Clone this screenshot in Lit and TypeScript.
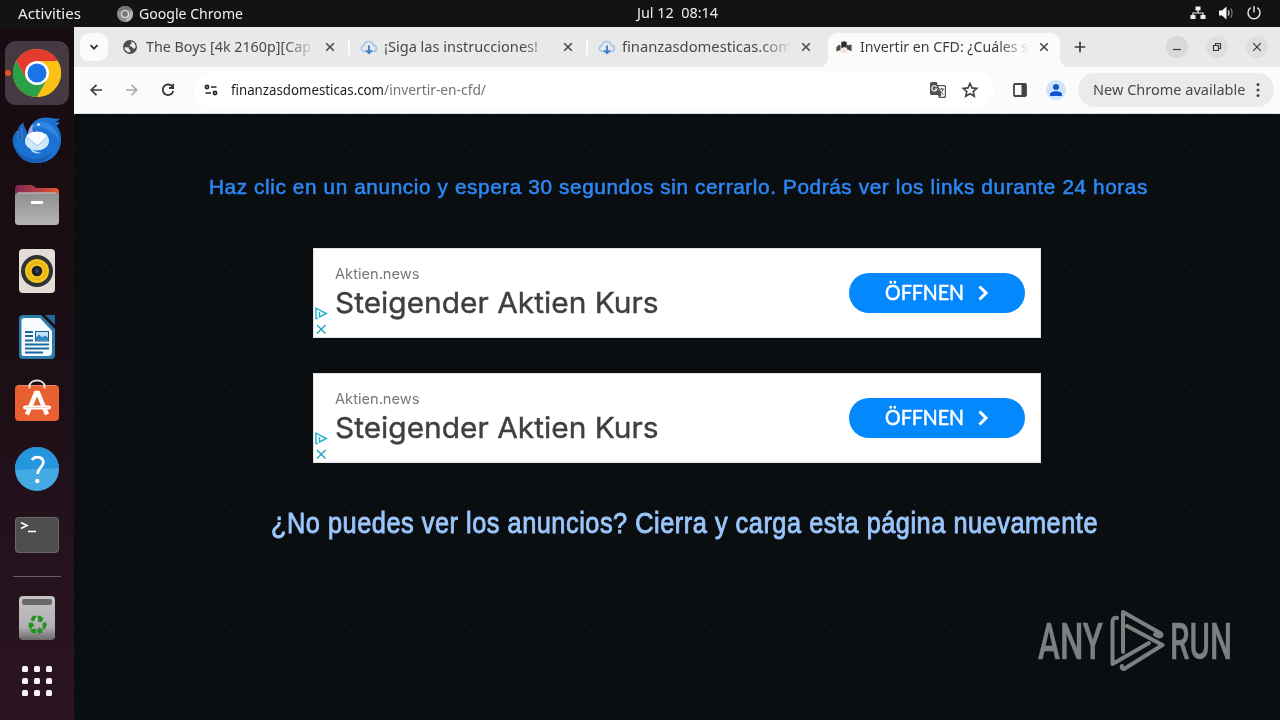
import { LitElement, html, svg, css } from "lit";
import type { TemplateResult } from "lit";
import { customElement, property, query } from "lit/decorators.js";
import { classMap } from "lit/directives/class-map.js";

interface Tab {
  title: string;
  width: number;
  icon: TemplateResult;
  active?: boolean;
  divider?: boolean;
}

// One line of text, squeezed or stretched to a given width.
@customElement("fit-text")
export class FitText extends LitElement {
  static styles = css`
    :host {
      display: inline-block;
      flex: none;
      text-align: left;
      white-space: pre;
    }
    span {
      display: inline-block;
      transform-origin: 0 50%;
    }
  `;

  @property({ type: Number }) width = 100;

  @query("span") private _span!: HTMLSpanElement;

  protected render() {
    return html`<span><slot></slot></span>`;
  }

  protected updated() {
    this.style.width = `${this.width}px`;
    this._span.style.transform = "none";
    const natural = this._span.getBoundingClientRect().width;
    if (natural > 0) {
      this._span.style.transform = `scaleX(${this.width / natural})`;
    }
  }
}

const globeIcon = html`
  <svg width="16" height="16" viewBox="0 0 16 16">
    <circle cx="8" cy="8" r="7" fill="#4c4d4f" />
    <path
      d="M2.400 8.300h3.300c.9 0 1.300.6 1.300 1.400v.9h1.300v2.700c-3.300.2-5.700-1.900-5.900-5zM9.300 2.600c2.600.6 4.300 2.600 4.400 5.300-.4 1.200-1.300 1.900-2.400 1.700-.7-.2-.8-.9-1.200-1.500-.6-.6-1.600-.5-2.200-1-.5-.6-.2-1.300.4-1.700.6-.3 1.100-.4 1.100-1.100z"
      fill="#e9e9e9"
    />
  </svg>
`;

const cloudIcon = html`
  <svg width="18" height="16" viewBox="0 0 18 16" fill="none">
    <path
      d="M6 12.400H4.300C2.600 12.400 1.400 11 1.400 9.400c0-1.600 1-2.700 2.500-2.900C4.100 4 6.200 2.500 8.600 2.500c2.400 0 4.200 1.500 4.700 3.800 1.900.1 3.100 1.400 3.100 3.100 0 1.700-1.200 3-2.900 3h-1.700"
      stroke="#a3c4ea"
      stroke-width="1.600"
    />
    <path d="M9 6.500v7.800M6 11.400L9 14.300l3-2.900" stroke="#3f7fd0" stroke-width="1.900" />
  </svg>
`;

const chessIcon = html`
  <svg width="16" height="16" viewBox="0 0 16 16">
    <path d="M.3 8.500L2.500 6h2v5l-4.200 1.500z" fill="#55504e" />
    <path d="M5.300 2.500l1.200.5L8 2l1.300 1 1.400-.5V9L8 8l-2.700 1.500z" fill="#2e2c2c" />
    <path d="M11 5.500l1.500.8 3-.8v7L13 11l-2-.5z" fill="#4b4543" />
    <path d="M3.500 12.500L8 9l4 3.500-1 1.500H4.500z" fill="#f2e3d9" />
  </svg>
`;

const TABS: Tab[] = [
  { title: "The Boys [4k 2160p][Cap", width: 165, icon: globeIcon, divider: true },
  { title: "¡Siga las instrucciones!", width: 154, icon: cloudIcon, divider: true },
  { title: "finanzasdomesticas.com", width: 170, icon: cloudIcon },
  { title: "Invertir en CFD: ¿Cuáles s", width: 168, icon: chessIcon, active: true },
];

const cross = html`
  <svg class="cross" width="10" height="10" viewBox="0 0 10 10">
    <path d="M1.200 1.200l7.600 7.600M8.800 1.200L1.200 8.800" stroke="#48494b" stroke-width="1.600" />
  </svg>
`;

// Dock icons share a 74x66 cell whose centre is 37,33.
const chromeDock = svg`
  <rect x="5" y="1" width="64" height="64" rx="11" fill="#463a42" />
  <circle cx="8" cy="33" r="3" fill="#e95420" />
  <circle cx="37" cy="33" r="24" fill="#fbc116" />
  <path d="M37 21h20.800A24 24 0 0 0 16.200 21L26.600 39z" fill="#e33b2e" />
  <path d="M16.200 21A24 24 0 0 0 37 57L47.400 39 37 33 26.600 39z" fill="#2aa147" />
  <path d="M47.400 39L37 57A24 24 0 0 0 57.800 21H37z" fill="#fbc116" />
  <circle cx="37" cy="33" r="12" fill="#fff" />
  <circle cx="37" cy="33" r="9.500" fill="#1b73e8" />
`;

const mailDock = svg`
  <path d="M17 47C10 36 12 28 18 24c1-4 3-6 5.500-7.500C24 21 26 24 28 28v16z" fill="#1d66bf" />
  <path d="M18 25c-1 6 0 12 3 18M22 22c-1 4 0 8 1 11" stroke="#3b8be0" fill="none" />
  <path d="M29 24c2-8 9-12.500 17-12.500 5 .5 9 1.500 14 1-1 2-3 3-5 3.500 2 0 4 .5 5 0-1 2-2 3-3.500 3.500C60 24 61.500 29 61 35c-1 13-11 22-24 22-12 0-20-7-22.500-17 0-4 2-7 5-9 2 5 5 6 7 5z" fill="#1c72d2" />
  <path d="M31 22c4-7 12-8 18-4 6 3 10 11 10 19-2-8-5-10-9-11-4-5-11-6-19-4z" fill="#3488e4" />
  <path d="M14 38c3 8 9 13 18 14.500 8 1 15-2 20-7-3 7-8 11.500-16 11.500-12 0-20-7-22-19z" fill="#195fb6" />
  <path d="M28 29c0-5 2-9 6-11-2 3-2 5-1 8z" fill="#a9a7e0" />
  <ellipse cx="37" cy="35" rx="12" ry="9.500" fill="#cfe8fa" />
  <path d="M26.500 30c4-5.500 16-6 21 0L37.500 39z" fill="#f8fcff" />
  <path d="M26.500 31.500L37.500 40 48 30.500" stroke="#a0c8e2" fill="none" />
  <path d="M30 42c4 2 6 5 11 4.500-3 2-9 1-11-4.500z" fill="#bfe0f7" />
  <circle cx="38.500" cy="18.500" r="1.300" fill="#fff" />
`;

const filesDock = svg`
  <defs>
    <linearGradient id="folder"><stop stop-color="#7c2756" /><stop offset="1" stop-color="#e8562a" /></linearGradient>
    <linearGradient id="front" x2="0" y2="1"><stop stop-color="#8f8f8f" /><stop offset="1" stop-color="#b4b4b4" /></linearGradient>
  </defs>
  <path d="M15 26v-9q0-4 4-4h12q2 0 3.500 1.500L36 16h19q4 0 4 4v9z" fill="url(#folder)" />
  <rect x="15" y="20.500" width="44" height="32.500" rx="3.500" fill="url(#front)" />
  <path d="M18 21h38" stroke="#c2c2c2" />
  <rect x="31" y="29" width="12" height="3" rx=".5" fill="#fff" />
`;

const musicDock = svg`
  <rect x="19" y="11" width="36" height="44" rx="4" fill="#e2ded6" />
  <circle cx="37" cy="33" r="16" fill="#303238" />
  <circle cx="37" cy="33" r="12" fill="#f3c51c" />
  <circle cx="37" cy="33" r="8.500" fill="none" stroke="#c99c12" stroke-width=".8" />
  <circle cx="37" cy="33" r="5.300" fill="#202227" />
  <circle cx="37" cy="33" r="2" fill="#39465a" />
`;

const writerDock = svg`
  <path d="M23 11h18l14 14v26q0 4-4 4H23q-4 0-4-4V15q0-4 4-4z" fill="#2a7dab" />
  <path d="M24 14h16l12 13v21q0 4-4 4H24q-2.500 0-2.500-2.500V16.500Q21.500 14 24 14z" fill="#f7fbfd" />
  <path d="M45 11h10v10z" fill="#1f6898" />
  <path d="M25 28h8M25 32h8M25 36.500h8M25 40.500h24M25 44.500h24M25 48.500h18" stroke="#166a9e" stroke-width="2" />
  <rect x="35.500" y="27.500" width="13" height="9.500" fill="#c4e3f7" stroke="#155f8f" />
  <path d="M36 36.500v-3l3-3 3 3 3-2 3 2v3z" fill="#3086bd" />
`;

const storeDock = svg`
  <path d="M29.500 18v-1.500c0-8 15-8 15 0V18" fill="none" stroke="#eee5df" stroke-width="2" />
  <rect x="15" y="15" width="44" height="36" rx="4" fill="#e8602f" />
  <path d="M18 15.500h38" stroke="#f28a62" />
  <path d="M29.500 18.500v-2c0-1 .2-1.500.5-2M44.500 18.500v-2c0-1-.2-1.500-.5-2" fill="none" stroke="#eee5df" stroke-width="2" />
  <path d="M27 44.500L36 23h2l9 21.500" fill="none" stroke="#fff" stroke-width="4.500" />
  <rect x="23" y="35.500" width="28" height="4" rx="2" fill="#fff" />
  <path d="M25 37.500h24" stroke="#f2b69d" stroke-width=".6" />
`;

const helpDock = svg`
  <circle cx="37" cy="33" r="22" fill="#43aae4" />
  <path d="M15 34a22 22 0 0 1 44-2z" fill="#2595de" />
  <path d="M31.800 24c3.500-4.500 11.800-3.500 11.500 2.500-.2 5-5.800 5.500-5.800 11.500" fill="none" stroke="#fff" stroke-width="2.800" />
  <circle cx="37.300" cy="45" r="2.200" fill="#fff" />
`;

const terminalDock = svg`
  <rect x="15" y="15" width="44" height="36" rx="4" fill="#4d4d4d" />
  <rect x="15.500" y="15.500" width="43" height="35" rx="3.500" fill="none" stroke="#686868" />
  <path d="M21 20.500l6 3-6 3" fill="none" stroke="#fff" stroke-width="1.600" />
  <path d="M28 29.500h8" stroke="#fff" stroke-width="1.600" />
`;

const trashDock = svg`
  <defs>
    <linearGradient id="bin" x2="0" y2="1"><stop stop-color="#c4c4c4" /><stop offset=".7" stop-color="#b3b0b3" /><stop offset="1" stop-color="#6b666a" /></linearGradient>
  </defs>
  <rect x="19" y="11" width="36" height="44" rx="4" fill="url(#bin)" />
  <rect x="22" y="14" width="30" height="6" rx="2" fill="#696969" />
  <g fill="#1f9420">
    <path d="M30.500 34.500l2.300-3.800h4l-3.200 6z" />
    <path d="M37.500 30.700h3.200l1.500 2.300 1.500-.8-1.800 4.800-5-.5 1.500-1z" />
    <path d="M42.500 38.500l3-1.700 1.500 3-2 3.700-2.200 1z" />
    <path d="M42.500 43.500v4.500h-2.500v1.800l-3.300-4 3.300-4v1.700z" />
    <path d="M36 43.500V48h-4l-2-3.500z" />
    <path d="M28 38l4.500-.5 2 4.300-1.500-.8-2.300 3.500L28 41l1.300-2.200z" />
  </g>
`;

const DOCK = [
  chromeDock,
  mailDock,
  filesDock,
  musicDock,
  writerDock,
  storeDock,
  helpDock,
  terminalDock,
];

@customElement("ad-banner")
export class AdBanner extends LitElement {
  static styles = css`
    :host {
      box-sizing: border-box;
      display: flex;
      width: 728px;
      height: 90px;
      background: #fff;
      border: 1px solid #e4e4e4;
      font-family: Inter, "Open Sans", sans-serif;
    }
    .marks {
      display: flex;
      flex-direction: column;
      justify-content: flex-end;
      gap: 2px;
      width: 21px;
      padding-bottom: 1px;
      box-sizing: border-box;
    }
    .marks svg {
      display: block;
    }
    .copy {
      flex: 1;
      display: flex;
      flex-direction: column;
      padding-top: 16px;
    }
    .site {
      font-size: 14.500px;
      line-height: 18px;
      color: #77787a;
    }
    .title {
      font-size: 29px;
      line-height: 40px;
      color: #3e3f42;
      -webkit-text-stroke: 0.400px #3e3f42;
    }
    .cta {
      align-self: center;
      display: flex;
      align-items: center;
      box-sizing: border-box;
      width: 176px;
      height: 40px;
      margin-right: 15px;
      padding-left: 36px;
      border-radius: 20px;
      background: #0388fe;
      color: #fff;
      font: 400 21px/36px Lato, "Open Sans", sans-serif;
      -webkit-text-stroke: 0.500px #fff;
      gap: 14px;
    }
    .cta fit-text {
      margin-bottom: 2px;
    }
  `;

  protected render() {
    return html`
      <div class="marks">
        <svg width="14" height="14" viewBox="0 0 14 14" fill="none" stroke="#26b4c9">
          <path d="M4 12.500H2V2.200L12.300 7.500 5.500 11V6" stroke-width="1.500" />
        </svg>
        <svg width="14" height="14" viewBox="0 0 14 14">
          <path d="M3 3l8.500 8.500M11.500 3L3 11.500" stroke="#26a9bd" stroke-width="1.500" />
        </svg>
      </div>
      <div class="copy">
        <fit-text class="site" width="84.500">Aktien.news</fit-text>
        <fit-text class="title" width="323.500">Steigender Aktien Kurs</fit-text>
      </div>
      <div class="cta">
        <fit-text width="79">ÖFFNEN</fit-text>
        <svg width="11" height="16" viewBox="0 0 11 16">
          <path d="M1.500 1.500L8 8l-6.500 6.500" fill="none" stroke="#fff" stroke-width="3" />
        </svg>
      </div>
    `;
  }
}

@customElement("app-root")
export class AppRoot extends LitElement {
  static styles = css`
    :host {
      display: flex;
      flex-direction: column;
      width: 1280px;
      height: 720px;
      overflow: hidden;
      position: relative;
      background: #0b0e11;
      font-family: "Noto Sans", "Open Sans", sans-serif;
      font-size: 14.300px;
    }
    svg {
      display: block;
      flex: none;
    }
    .topbar {
      box-sizing: border-box;
      display: flex;
      align-items: center;
      height: 27px;
      padding: 0 18px 0 18px;
      background: #131313;
      color: #efefef;
      line-height: 26px;
    }
    .topbar .app {
      display: flex;
      align-items: center;
      gap: 6px;
      margin: 0 394px 0 36px;
    }
    .topbar .clock {
      margin-bottom: 2px;
    }
    .tray {
      display: flex;
      gap: 12px;
      margin: 0 0 2px auto;
    }
    .desktop {
      flex: 1;
      display: flex;
      min-height: 0;
    }
    .dock {
      width: 74px;
      padding-top: 13px;
      box-sizing: border-box;
      background: linear-gradient(#170c11, #1b0e14 45%, #2b1522);
    }
    .dock hr {
      width: 48px;
      height: 1px;
      margin: 8px auto;
      border: 0;
      background: #6a5d64;
    }
    .window {
      flex: 1;
      display: flex;
      flex-direction: column;
    }
    .tabs {
      display: flex;
      align-items: center;
      height: 40px;
      padding: 0 12px 0 6px;
      box-sizing: border-box;
      background: #e9e9e9;
      color: #48494b;
    }
    .search {
      display: grid;
      place-items: center;
      width: 28px;
      height: 28px;
      margin-right: 4px;
      border-radius: 9px;
      background: #fbfbfb;
    }
    .tab {
      position: relative;
      box-sizing: border-box;
      display: flex;
      align-items: center;
      width: 238px;
      height: 40px;
      padding: 0 15px 0 10px;
    }
    .tab .icon {
      display: grid;
      place-items: center;
      width: 16px;
      margin-right: 8px;
    }
    .tab .name {
      width: 168px;
      overflow: hidden;
      line-height: 40px;
      height: 40px;
      mask-image: linear-gradient(90deg, #000 138px, transparent 170px);
    }
    .tab .cross {
      margin-left: auto;
    }
    .tab.divider::after {
      content: "";
      position: absolute;
      right: 0;
      top: 12px;
      width: 2px;
      height: 16px;
      background: #fbfbfb;
    }
    .tab.active {
      color: #3c3d3f;
    }
    .tab.active > * {
      z-index: 1;
    }
    .tab.active::before {
      content: "";
      position: absolute;
      inset: 6px 4px 0 2px;
      border-radius: 9px 9px 0 0;
      background: #fbfbfb;
    }
    .tab.active::after {
      content: "";
      position: absolute;
      left: -6px;
      right: -4px;
      bottom: 0;
      height: 8px;
      background:
        radial-gradient(circle at 0 0, transparent 7.500px, #fbfbfb 8px) left / 8px 8px no-repeat,
        radial-gradient(circle at 100% 0, transparent 7.500px, #fbfbfb 8px) right / 8px 8px no-repeat;
    }
    .plus {
      margin-left: 10px;
    }
    .controls {
      display: flex;
      gap: 18px;
      margin-left: auto;
    }
    .toolbar {
      display: flex;
      align-items: center;
      box-sizing: border-box;
      height: 47px;
      padding: 0 6px 1px 14px;
      background: #fbfbfb;
      border-bottom: 1px solid #dfdfdf;
    }
    .nav {
      display: flex;
      gap: 20px;
      margin: 0 18px 0 0;
    }
    .nav svg {
      width: 16px;
    }
    .omnibox {
      display: flex;
      align-items: center;
      box-sizing: border-box;
      width: 800px;
      height: 34px;
      padding: 0 15px 0 10px;
      border-radius: 17px;
      background: #fff;
      line-height: 34px;
      color: #1c1c1d;
    }
    .omnibox .tune {
      margin-right: 13px;
    }
    .omnibox .path {
      color: #727375;
      margin-right: auto;
    }
    .omnibox .star {
      margin-left: 14px;
    }
    .side {
      margin: 0 18px 0 18px;
    }
    .update {
      display: flex;
      align-items: center;
      box-sizing: border-box;
      width: 196px;
      height: 34px;
      margin-left: auto;
      padding-left: 15px;
      border-radius: 17px;
      background: #ebebeb;
      color: #48494b;
      line-height: 34px;
      gap: 10px;
    }
    .page {
      flex: 1;
      display: flex;
      flex-direction: column;
      align-items: flex-start;
      font-family: "Liberation Sans", Arial, sans-serif;
      background: radial-gradient(circle at 0.500px 0.500px, #2b3034 0.500px, transparent 1px) 0 0 / 30px 30px
        #0b0e11;
    }
    .lead {
      margin: 59px 0 48px 135px;
      font-size: 20.500px;
      letter-spacing: 0.600px;
      line-height: 27px;
      color: #2d88f5;
      -webkit-text-stroke: 0.500px #2d88f5;
    }
    ad-banner {
      margin: 0 0 35px 239px;
    }
    .retry {
      margin: 5px 0 0 197px;
      font-size: 29.500px;
      letter-spacing: 0.600px;
      line-height: 40px;
      color: #9ac6fb;
      -webkit-text-stroke: 0.900px #9ac6fb;
    }
    .watermark {
      position: absolute;
      left: 1038px;
      top: 608px;
      display: flex;
      align-items: center;
      color: #7d7f80;
      font: 500 50px/68px Roboto, sans-serif;
      -webkit-text-stroke: 0.500px #7d7f80;
    }
    .watermark svg {
      margin: 0 5px 2px 6px;
    }
  `;

  private _renderTopbar() {
    return html`
      <div class="topbar">
        <fit-text width="63">Activities</fit-text>
        <div class="app">
          <svg width="16" height="16" viewBox="0 0 16 16">
            <circle cx="8" cy="8" r="8" fill="#8d8d8d" />
            <path d="M8 8L1.100 4A8 8 0 0 1 14.900 4H8z" fill="#777" />
            <path d="M8 16l3.500-6L14.900 4A8 8 0 0 1 8 16z" fill="#b5b5b5" />
            <circle cx="8" cy="8" r="4" fill="#e6e6e6" />
            <circle cx="8" cy="8" r="2.900" fill="#777" />
          </svg>
          <fit-text width="104">Google Chrome</fit-text>
        </div>
        <fit-text class="clock" width="81">Jul 12&nbsp; 08:14</fit-text>
        <div class="tray">
          <svg width="16" height="16" viewBox="0 0 16 16" fill="#efefef">
            <path d="M5.500 1.500h5v4h-5zM.5 10h5v4h-5zM10.500 10h5v4h-5z" />
            <path d="M8 5v3M3 11V8h10v3" fill="none" stroke="#efefef" stroke-width="1.200" />
          </svg>
          <svg width="16" height="16" viewBox="0 0 16 16">
            <path d="M1 5.500h3l4.500-4v13L4 10.500H1z" fill="#f4f4f4" />
            <path d="M10.300 5.500q1.500 2.500 0 5" fill="none" stroke="#ddd" stroke-width="1.400" />
            <path d="M12.500 3.300q3.200 4.700 0 9.400" fill="none" stroke="#777" stroke-width="1.200" />
          </svg>
          <svg width="16" height="16" viewBox="0 0 16 16" fill="none" stroke="#e8e8e8" stroke-width="1.400">
            <path d="M4.800 2.700a6 6 0 1 0 6.400 0M8 1v6.500" />
          </svg>
        </div>
      </div>
    `;
  }

  private _renderDock() {
    return html`
      <div class="dock">
        ${DOCK.map(
          (icon) => html`<svg width="74" height="66" viewBox="0 0 74 66">${icon}</svg>`,
        )}
        <hr />
        <svg width="74" height="66" viewBox="0 0 74 66">${trashDock}</svg>
        <svg width="74" height="60" viewBox="0 0 74 60" fill="#f7f5f6">
          ${[15, 27, 39].map((y) =>
            [22, 34, 46].map(
              (x) => svg`<rect x=${x} y=${y} width="6" height="6" rx="1.500" />`,
            ),
          )}
        </svg>
      </div>
    `;
  }

  private _renderTab(tab: Tab) {
    const classes = {
      tab: true,
      active: !!tab.active,
      divider: !!tab.divider,
    };
    return html`
      <div class=${classMap(classes)}>
        <div class="icon">${tab.icon}</div>
        <div class="name"><fit-text width=${tab.width}>${tab.title}</fit-text></div>
        ${cross}
      </div>
    `;
  }

  private _renderControl(d: string, shade: string) {
    return html`
      <svg width="22" height="22" viewBox="0 0 22 22">
        <circle cx="11" cy="11" r="11" fill=${shade} />
        <path d=${d} fill="none" stroke="#38393a" stroke-width="1.200" />
      </svg>
    `;
  }

  private _renderTabs() {
    return html`
      <div class="tabs">
        <div class="search">
          <svg width="10" height="8" viewBox="0 0 10 8">
            <path d="M1.500 2.200L5 5.700l3.500-3.500" fill="none" stroke="#2e2f30" stroke-width="1.700" />
          </svg>
        </div>
        ${TABS.map((tab) => this._renderTab(tab))}
        <svg class="plus" width="12" height="12" viewBox="0 0 12 12">
          <path d="M6 .8v10.400M.8 6h10.400" stroke="#3c3d3f" stroke-width="1.700" />
        </svg>
        <div class="controls">
          ${this._renderControl("M7 13.500h8", "#d9d9d9")}
          ${this._renderControl("M7.500 9.500h5V14.500h-5zM9.500 9V7.500H14.500v5h-1.500", "#dedede")}
          ${this._renderControl("M7.200 7.200l7.600 7.600M14.800 7.200l-7.600 7.600", "#dedede")}
        </div>
      </div>
    `;
  }

  private _renderToolbar() {
    return html`
      <div class="toolbar">
        <div class="nav">
          <svg height="16" viewBox="0 0 16 16" fill="none" stroke="#38393b" stroke-width="1.700">
            <path d="M14 8H3.500M8.500 2.800L3.200 8l5.300 5.200" />
          </svg>
          <svg height="16" viewBox="0 0 16 16" fill="none" stroke="#a8a9aa" stroke-width="1.600">
            <path d="M2 8h10.500M7.500 2.800L12.800 8l-5.300 5.200" />
          </svg>
          <svg height="16" viewBox="0 0 16 16" fill="none" stroke="#38393b" stroke-width="1.800">
            <path d="M12.600 5A5.300 5.300 0 1 0 13.300 8.800" />
            <path d="M13.200 1.800V6H9" />
          </svg>
        </div>
        <div class="omnibox">
          <svg class="tune" width="14" height="14" viewBox="0 0 14 14" fill="none" stroke="#232425" stroke-width="1.700">
            <circle cx="3" cy="4" r="1.600" />
            <path d="M7 4h5.500M1.500 10H7" />
            <circle cx="11" cy="10" r="1.600" />
          </svg>
          <fit-text width="153">finanzasdomesticas.com</fit-text>
          <fit-text class="path" width="102">/invertir-en-cfd/</fit-text>
          <svg width="18" height="18" viewBox="0 0 18 18">
            <path d="M2.500 1h5.200l1 3h6.600q1.700 0 1.700 1.500v10q0 1.500-1.500 1.500H10l-1-3H2.500Q1 14 1 12.500v-10Q1 1 2.500 1z" fill="#515254" />
            <path d="M9.200 5.200h5.800q.8 0 .8.800v9q0 .8-.8.800h-4l1.500-2z" fill="#fff" />
            <path d="M7.600 6a2.600 2.600 0 1 0 .3 2H5.600" fill="none" stroke="#fff" stroke-width="1.200" />
            <path d="M10 8h5M12.500 7v1M14.200 8q-1 3-3 4.500M11 9.500q1.200 2.500 3.500 4" fill="none" stroke="#515254" />
          </svg>
          <svg class="star" width="18" height="18" viewBox="0 0 18 18">
            <path d="M9 2.500l2 4.400 4.800.5-3.600 3.200 1.100 4.700L9 12.800l-4.300 2.500 1.100-4.700L2.200 7.400l4.800-.5z" fill="none" stroke="#434446" stroke-width="1.600" />
          </svg>
        </div>
        <svg class="side" width="16" height="16" viewBox="0 0 16 16">
          <rect x="2" y="2" width="12" height="12" rx="1" fill="none" stroke="#434446" stroke-width="1.800" />
          <path d="M9.500 2H14v12H9.500z" fill="#434446" />
        </svg>
        <svg width="20" height="20" viewBox="0 0 20 20">
          <circle cx="10" cy="10" r="10" fill="#d3e3fd" />
          <circle cx="10" cy="7" r="3" fill="#0b57d0" />
          <path d="M4 16v-1.800c0-4 12-4 12 0V16z" fill="#0b57d0" />
        </svg>
        <div class="update">
          <fit-text width="152.500">New Chrome available</fit-text>
          <svg width="4" height="16" viewBox="0 0 4 16" fill="#434446">
            <circle cx="2" cy="2.500" r="1.500" />
            <circle cx="2" cy="8" r="1.500" />
            <circle cx="2" cy="13.500" r="1.500" />
          </svg>
        </div>
      </div>
    `;
  }

  private _renderPage() {
    return html`
      <div class="page">
        <fit-text class="lead" width="939"
          >Haz clic en un anuncio y espera 30 segundos sin cerrarlo. Podrás ver los links durante 24 horas</fit-text
        >
        <ad-banner></ad-banner>
        <ad-banner></ad-banner>
        <fit-text class="retry" width="827"
          >¿No puedes ver los anuncios? Cierra y carga esta página nuevamente</fit-text
        >
      </div>
    `;
  }

  private _renderWatermark() {
    return html`
      <div class="watermark">
        <fit-text width="65">ANY</fit-text>
        <svg width="56" height="66" viewBox="0 0 56 66" fill="none" stroke="#7d7f80" stroke-width="4" stroke-linejoin="round" stroke-linecap="round">
          <path d="M8 10Q3.500 9 3.500 14v42L40 35" />
          <path d="M14 44V4L52 25.500q1.500 3-2 3L46 26.500" />
          <path d="M18 18L53.500 37 15 61q-3 0-2-3" />
        </svg>
        <fit-text width="62">RUN</fit-text>
      </div>
    `;
  }

  protected render() {
    return html`
      ${this._renderTopbar()}
      <div class="desktop">
        ${this._renderDock()}
        <div class="window">
          ${this._renderTabs()} ${this._renderToolbar()} ${this._renderPage()}
        </div>
      </div>
      ${this._renderWatermark()}
    `;
  }
}

declare global {
  interface HTMLElementTagNameMap {
    "fit-text": FitText;
    "ad-banner": AdBanner;
    "app-root": AppRoot;
  }
}
